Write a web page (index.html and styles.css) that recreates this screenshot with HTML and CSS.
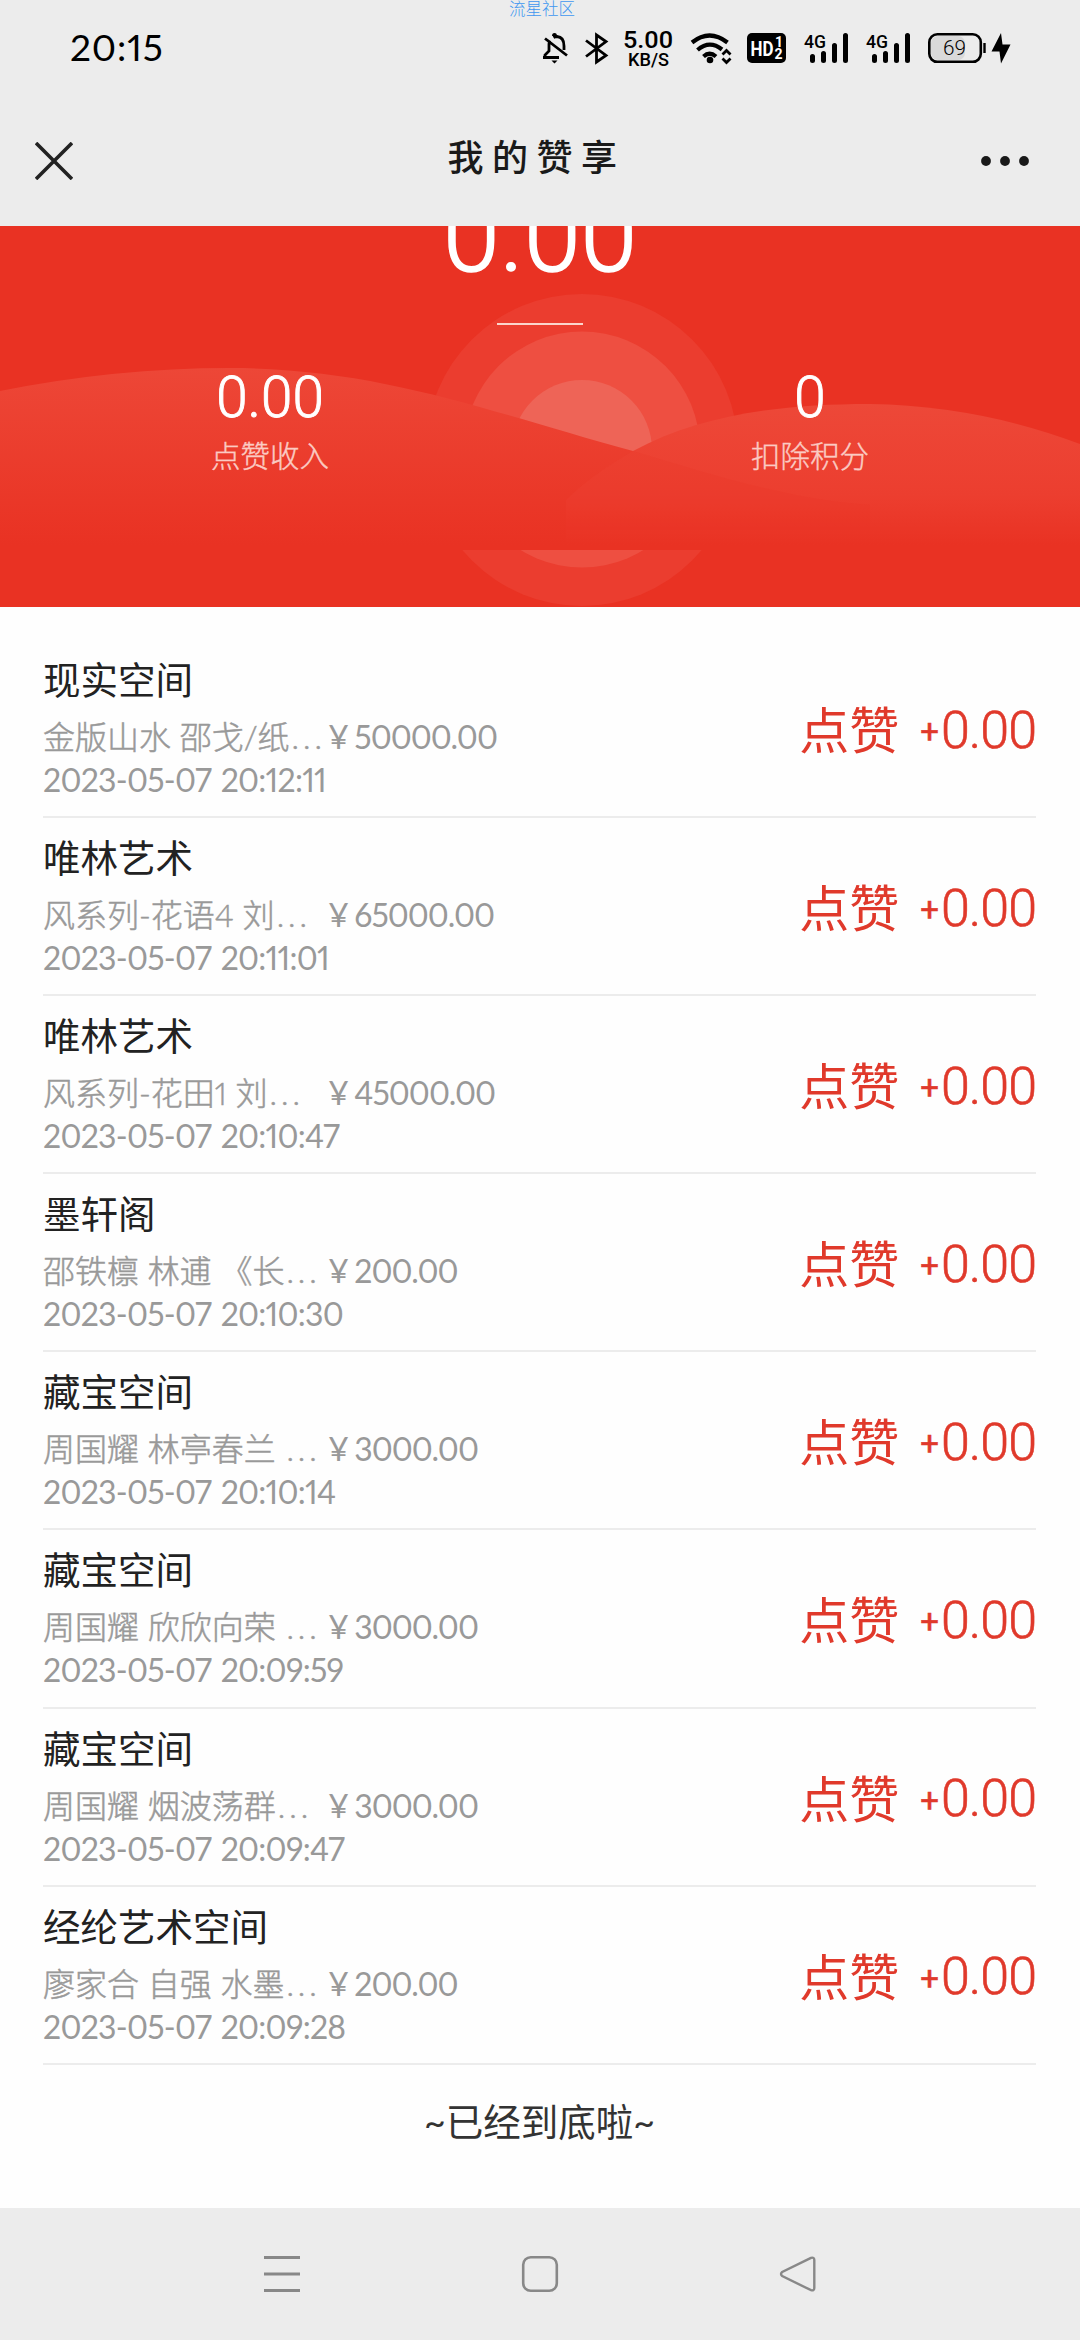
FILE: index.html
```html
<!DOCTYPE html>
<html lang="zh-CN">
<head>
<meta charset="utf-8">
<title>我的赞享</title>
<link rel="stylesheet" href="styles.css">
</head>
<body>
<div class="watermark">流星社区</div>
<header class="top">
  <div class="status">
    <span class="clock">20:15</span>
    <svg class="status-icons" width="540" height="60" viewBox="530 20 540 60">
      <g fill="none" stroke="#000" stroke-width="2.8">
        <path d="M545 57V55L549 51V44Q549 42 550 40.500M553.500 37.500Q555 36.500 557 36.500Q564 37 564 46V50M543 57.500H559M545 38.500L567 55.500"/>
        <path d="M586 40.500L606 55.500L596.500 62V35L606 41.500L586 56.500"/>
      </g>
      <path d="M552 36Q552 33 554.500 33T557 36ZM551.500 60.500H557.500L554.500 63.500Z"/>
      <text class="speed" x="648" y="47.500" textLength="50" lengthAdjust="spacingAndGlyphs">5.00</text>
      <text class="unit" x="648.500" y="65.500" textLength="41" lengthAdjust="spacingAndGlyphs">KB/S</text>
      <g fill="none" stroke="#000" stroke-width="4.200">
        <path d="M692 42.500Q709.500 28.500 727.500 42.500M697.500 50Q709.500 39.500 722 49.500M703.500 56.500Q709.500 51 716 56.500"/>
      </g>
      <circle cx="710" cy="60" r="3.300"/>
      <path d="M722.500 54.500L726.500 50.500L730.500 54.500M722.500 58.500L726.500 62.500L730.500 58.500" fill="none" stroke="#000" stroke-width="2.800"/>
      <rect x="747" y="33" width="39" height="30" rx="5"/>
      <text class="hd" x="750.500" y="56" textLength="23" lengthAdjust="spacingAndGlyphs">HD</text>
      <text class="hd-n" x="775" y="46.500">1</text><text class="hd-n" x="774.500" y="59">2</text>
      <g id="sig">
        <text class="net" x="804" y="47.500" textLength="22" lengthAdjust="spacingAndGlyphs">4G</text>
        <path d="M812.500 56.500V60.500M823.500 53.500V60.500M834.500 45.500V60.500M845.500 35.500V60.500" fill="none" stroke="#000" stroke-width="5" stroke-linecap="round"/>
      </g>
      <use href="#sig" x="62"/>
      <rect x="931" y="36" width="34" height="24" rx="7" fill="#d9d9d9"/>
      <rect x="929.300" y="34.300" width="51.500" height="27.500" rx="8" fill="none" stroke="#000" stroke-width="2.600"/>
      <path d="M984.500 43V53" stroke="#000" stroke-width="2.400"/>
      <text class="level" x="954.500" y="55" textLength="23" lengthAdjust="spacingAndGlyphs">69</text>
      <path d="M1001 33L991.500 51.500H999.500L1001 63.500L1010.500 44.500H1002.500Z"/>
    </svg>
  </div>
  <div class="nav">
    <svg width="38" height="38" viewBox="0 0 38 38"><path d="M1 1L37 37M37 1L1 37" stroke="#222" stroke-width="3.600"/></svg>
    <h1 class="title">我的赞享</h1>
    <svg width="50" height="12" viewBox="0 0 50 12" fill="#191919"><circle cx="6" cy="6" r="4.900"/><circle cx="25" cy="6" r="4.900"/><circle cx="44" cy="6" r="4.900"/></svg>
  </div>
</header>

<section class="hero">
  <svg class="scene" width="1080" height="381" viewBox="0 226 1080 381">
    <defs>
      <linearGradient id="hillA" gradientUnits="userSpaceOnUse" x1="0" y1="368" x2="0" y2="545"><stop offset="0" stop-color="#ed4737"/><stop offset="1" stop-color="#e93223"/></linearGradient>
      <linearGradient id="hillB" gradientUnits="userSpaceOnUse" x1="0" y1="404" x2="0" y2="545"><stop offset="0" stop-color="#ed4838"/><stop offset=".65" stop-color="#ec3e2f"/><stop offset="1" stop-color="#e93223"/></linearGradient>
    </defs>
    <circle cx="582" cy="450" r="156" fill="#eb3d2f"/>
    <circle cx="582" cy="449.500" r="118" fill="#ee4f41"/>
    <circle cx="582" cy="450" r="70" fill="#ee6457"/>
    <path d="M0 391Q115 368 230 368C380 368 490 412 633 451C710 474 790 500 870 505V550H0Z" fill="url(#hillA)"/>
    <path d="M566 550V500Q590 476 633 451C700 415 780 404 870 404Q980 406 1080 444V550Z" fill="url(#hillB)"/>
    <path d="M633 451C710 474 790 500 870 505V530H566V500Q590 476 633 451Z" fill="#e93223" opacity=".15"/>
  </svg>
  <div class="total">0.00</div>
  <div class="rule"></div>
  <div class="stats">
    <div class="stat"><b class="num">0.00</b><span class="label">点赞收入</span></div>
    <div class="stat"><b class="num">0</b><span class="label">扣除积分</span></div>
  </div>
</section>

<main class="list">
  <article class="row"><div class="info"><h2 class="shop">现实空间</h2><p class="work"><span class="name">金版山水 邵戈/纸<i class="dots">...</i></span><span class="price">¥ 50000.00</span></p><time class="date">2023-05-07 20:12:11</time></div><div class="gain"><span class="like">点赞</span><span class="plus">+</span><span class="amt">0.00</span></div></article>
  <article class="row"><div class="info"><h2 class="shop">唯林艺术</h2><p class="work"><span class="name">风系列-花语4 刘<i class="dots">...</i></span><span class="price">¥ 65000.00</span></p><time class="date">2023-05-07 20:11:01</time></div><div class="gain"><span class="like">点赞</span><span class="plus">+</span><span class="amt">0.00</span></div></article>
  <article class="row"><div class="info"><h2 class="shop">唯林艺术</h2><p class="work"><span class="name">风系列-花田1 刘<i class="dots">...</i></span><span class="price">¥ 45000.00</span></p><time class="date">2023-05-07 20:10:47</time></div><div class="gain"><span class="like">点赞</span><span class="plus">+</span><span class="amt">0.00</span></div></article>
  <article class="row"><div class="info"><h2 class="shop">墨轩阁</h2><p class="work"><span class="name">邵铁檩 林逋 《长<i class="dots">...</i></span><span class="price">¥ 200.00</span></p><time class="date">2023-05-07 20:10:30</time></div><div class="gain"><span class="like">点赞</span><span class="plus">+</span><span class="amt">0.00</span></div></article>
  <article class="row"><div class="info"><h2 class="shop">藏宝空间</h2><p class="work"><span class="name">周国耀 林亭春兰 <i class="dots">...</i></span><span class="price">¥ 3000.00</span></p><time class="date">2023-05-07 20:10:14</time></div><div class="gain"><span class="like">点赞</span><span class="plus">+</span><span class="amt">0.00</span></div></article>
  <article class="row"><div class="info"><h2 class="shop">藏宝空间</h2><p class="work"><span class="name">周国耀 欣欣向荣 <i class="dots">...</i></span><span class="price">¥ 3000.00</span></p><time class="date">2023-05-07 20:09:59</time></div><div class="gain"><span class="like">点赞</span><span class="plus">+</span><span class="amt">0.00</span></div></article>
  <article class="row"><div class="info"><h2 class="shop">藏宝空间</h2><p class="work"><span class="name">周国耀 烟波荡群<i class="dots">...</i></span><span class="price">¥ 3000.00</span></p><time class="date">2023-05-07 20:09:47</time></div><div class="gain"><span class="like">点赞</span><span class="plus">+</span><span class="amt">0.00</span></div></article>
  <article class="row"><div class="info"><h2 class="shop">经纶艺术空间</h2><p class="work"><span class="name">廖家合 自强 水墨<i class="dots">...</i></span><span class="price">¥ 200.00</span></p><time class="date">2023-05-07 20:09:28</time></div><div class="gain"><span class="like">点赞</span><span class="plus">+</span><span class="amt">0.00</span></div></article>
  <p class="end">~已经到底啦~</p>
</main>

<footer class="keys">
  <svg width="40" height="40" viewBox="0 0 40 40"><path d="M2 3.500H38M2 20H38M2 36.500H38" stroke="#888" stroke-width="3"/></svg>
  <svg width="40" height="40" viewBox="0 0 40 40"><rect x="3.200" y="3.200" width="33.600" height="33.600" rx="7.500" fill="none" stroke="#888" stroke-width="2.600"/></svg>
  <svg width="40" height="40" viewBox="0 0 40 40"><path d="M33 3.800L4.200 18Q1.800 20 4.200 22L33 36.200Q36.300 37 36.300 34V6Q36.300 3 33 3.800Z" fill="none" stroke="#888" stroke-width="2.400"/></svg>
</footer>
</body>
</html>
```

FILE: styles.css
```css
* { box-sizing: border-box; margin: 0; padding: 0; }
body {
  position: relative;
  width: 1080px;
  height: 2340px;
  overflow: hidden;
  display: flex;
  flex-direction: column;
  background: #fefefe;
  font-family: Lato, "Noto Sans CJK SC", sans-serif;
  font-variant-numeric: proportional-nums;
}
svg { display: block; }
.watermark {
  position: absolute;
  top: 0;
  left: 0;
  width: 1084px;
  text-align: center;
  font: 300 16.500px/17px "Noto Sans CJK SC", sans-serif;
  color: #3f97f0;
}
.top { height: 226px; background: #ececec; flex: none; }
.status { height: 80px; padding: 20px 10px 0 70px; display: flex; justify-content: space-between; }
.clock { font-size: 37px; line-height: 54px; letter-spacing: .9px; color: #000; }
.speed { font: 500 23px Roboto, sans-serif; text-anchor: middle; }
.unit { font: 500 18px Roboto, sans-serif; text-anchor: middle; }
.hd { font: 700 21px Roboto, sans-serif; fill: #fff; }
.hd-n { font: 700 14px Roboto, sans-serif; fill: #fff; }
.net { font: 500 19px Roboto, sans-serif; }
.level { font: 300 21px Roboto, sans-serif; text-anchor: middle; }
.nav { height: 146px; padding: 16px 50px 0 35px; display: flex; align-items: center; justify-content: space-between; }
.title { font: 500 36px/50px "Noto Sans CJK SC", sans-serif; letter-spacing: 8.500px; color: #1a1a1a; margin: -12px 0 0 20px; }

.hero { position: relative; height: 381px; flex: none; overflow: hidden; background: #e93223; color: #fff; display: flex; flex-direction: column; align-items: center; }
.scene { position: absolute; inset: 0; }
.total { position: relative; height: 97px; display: flex; align-items: flex-end; font: 300 102px/100px Roboto, sans-serif; padding-bottom: 37px; -webkit-text-stroke: 1.5px #fff; }
.rule { position: relative; width: 86px; height: 2px; background: #fbd5cc; flex: none; }
.stats { position: relative; align-self: stretch; display: flex; margin-top: 40px; }
.stat { flex: 1; display: flex; flex-direction: column; align-items: center; }
.num { font: 300 56.500px/66px Roboto, sans-serif; -webkit-text-stroke: .9px #fff; }
.label { margin-top: -2px; font: 300 29.500px/50px "Noto Sans CJK SC", sans-serif; color: #fbcbc3; -webkit-text-stroke: .4px #fbcbc3; }

.list { height: 1601px; padding: 33px 44px 0 43px; flex: none; }
.row { height: 178.100px; padding-top: 15px; border-bottom: 2px solid #ececec; display: flex; justify-content: space-between; }
.shop { font: 400 37.500px/46px "Noto Sans CJK SC", sans-serif; color: #222; }
.work { display: flex; height: 43px; margin-top: 14px; font-size: 32px; line-height: 43px; color: #999; }
.name { width: 285px; white-space: pre; font-family: Lato, "Noto Sans CJK SC", sans-serif; font-weight: 300; -webkit-text-stroke: .5px #999; }
.dots { font-style: normal; letter-spacing: 4px; margin-left: 2px; }
.price { white-space: nowrap; letter-spacing: -1px; word-spacing: -1px; }
.date { display: block; font-size: 32px; line-height: 43px; letter-spacing: -.75px; word-spacing: 2px; color: #999; }
.gain { display: flex; align-items: center; height: 58px; margin-top: 46px; color: #e0392b; }
.like { font: 400 50px/58px "Noto Sans CJK SC", sans-serif; margin-top: -6px; }
.plus { font: 400 33px/58px Roboto, sans-serif; margin: 4px 2px 0 21px; -webkit-text-stroke: .5px #e0392b; }
.amt { font: 300 52px/58px Roboto, sans-serif; letter-spacing: -1px; margin-top: 1px; -webkit-text-stroke: .6px #e0392b; }
.end { margin-top: 29px; text-align: center; font: 400 37.500px/56px Lato, "Noto Sans CJK SC", sans-serif; color: #333; }
.keys { height: 132px; flex: none; background: #ececec; display: flex; justify-content: center; align-items: center; gap: 218px; }
```
